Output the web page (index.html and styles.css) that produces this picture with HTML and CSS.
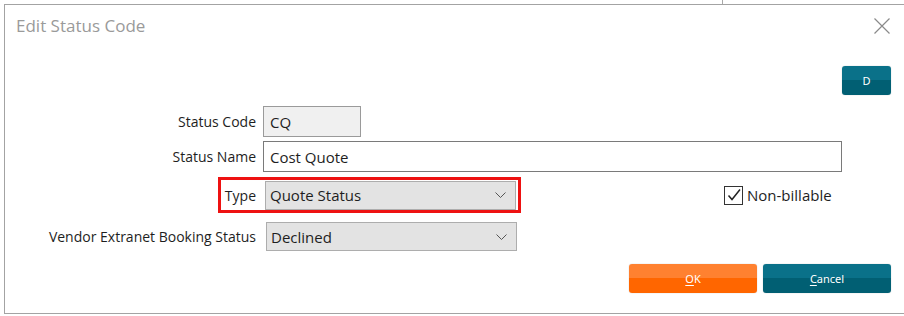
FILE: index.html
```html
<!DOCTYPE html>
<html lang="en">
<head>
    <meta charset="UTF-8">
    <title>Edit Status Code</title>
    <link rel="stylesheet" href="styles.css">
</head>
<body>

    <!-- bit of the window behind the dialog -->
    <div class="behind"></div>

    <div class="dialog">
        <!-- Title bar -->
        <div class="dialog-header">
            <span class="dialog-title">Edit Status Code</span>
            <svg class="close-icon" width="16" height="16" viewBox="0 0 16 16">
                <path d="M0.5 0.5 L15.5 15.5 M15.5 0.5 L0.5 15.5" stroke="#8a8a8a" stroke-width="1.2" fill="none"/>
            </svg>
        </div>

        <div class="toolbar">
            <button class="btn btn-teal btn-d">D</button>
        </div>

        <!-- Form fields -->
        <div class="row row-code">
            <label class="label">Status Code</label>
            <div class="input input-code">CQ</div>
        </div>

        <div class="row row-name">
            <label class="label">Status Name</label>
            <div class="input input-name">Cost Quote</div>
        </div>

        <div class="row row-type">
            <div class="highlight">
                <label class="label-inline">Type</label>
                <div class="select select-type">
                    <span>Quote Status</span>
                    <svg class="chevron" width="11" height="6" viewBox="0 0 11 6">
                        <path d="M0.5 0.5 L5.5 5.5 L10.5 0.5" stroke="#555" stroke-width="1" fill="none"/>
                    </svg>
                </div>
            </div>
            <div class="check">
                <span class="checkbox">
                    <svg width="16" height="16" viewBox="0 0 16 16">
                        <path d="M2.5 8.5 L6 12.5 L14 2.5" stroke="#222" stroke-width="1.5" fill="none"/>
                    </svg>
                </span>
                <span>Non-billable</span>
            </div>
        </div>

        <div class="row row-vendor">
            <label class="label label-vendor">Vendor Extranet Booking Status</label>
            <div class="select select-vendor">
                <span>Declined</span>
                <svg class="chevron" width="11" height="6" viewBox="0 0 11 6">
                    <path d="M0.5 0.5 L5.5 5.5 L10.5 0.5" stroke="#555" stroke-width="1" fill="none"/>
                </svg>
            </div>
        </div>

        <!-- Footer buttons -->
        <div class="footer">
            <button class="btn btn-orange"><u>O</u>K</button>
            <button class="btn btn-teal"><u>C</u>ancel</button>
        </div>
    </div>

</body>
</html>
```

FILE: styles.css
```css
/* General */
body {
    margin: 0;
    background: #fff;
    font-family: 'Open Sans', 'Noto Sans', sans-serif;
    color: #1e1e1e;
    overflow: hidden;
}

.behind {
    width: 1px;
    height: 4px;
    margin-left: 722px;
    background: #a8a8a8;
}

/* Dialog frame - right edge runs off screen */
.dialog {
    margin-left: 4px;
    border-top: 1px solid #a3a3a3;
    border-left: 1px solid #a3a3a3;
    border-bottom: 1px solid #a3a3a3;
    padding-right: 13px;
    padding-bottom: 20px;
}

.dialog-header {
    height: 50px;
    display: flex;
    align-items: flex-start;
    justify-content: space-between;
}

.dialog-title {
    margin-top: 9px;
    margin-left: 11px;
    font-size: 17px;
    line-height: 24px;
    color: #9a9a9a;
}

.close-icon {
    margin-top: 13px;
    margin-right: 1px;
}

.toolbar {
    display: flex;
    justify-content: flex-end;
    margin-top: 11px;
}

/* Buttons */
.btn {
    height: 29px;
    width: 128px;
    border: none;
    border-radius: 3px;
    color: #fff;
    font-family: 'Noto Sans', sans-serif;
    font-size: 11px;
    padding: 0;
    box-shadow: 0 0 1px rgba(0, 0, 0, 0.35);
}

.btn u {
    text-decoration-thickness: 1px;
    text-underline-offset: 2px;
}

.btn-teal {
    background: linear-gradient(#0a7189 0%, #0a7189 50%, #015f73 50%, #015f73 100%);
}

.btn-orange {
    background: linear-gradient(#ff8130 0%, #ff8130 50%, #ff6600 50%, #ff6600 100%);
}

.btn-d {
    width: 49px;
}

/* Rows */
.row {
    display: flex;
    align-items: center;
    font-size: 14px;
}

.label {
    width: 251px;
    padding-right: 7px;
    text-align: right;
    flex-shrink: 0;
}

.row-code {
    margin-top: 11px;
}

.row-name {
    margin-top: 4px;
}

.row-type {
    margin-top: 5px;
}

.row-vendor {
    margin-top: 9px;
}

.input {
    box-sizing: border-box;
    height: 31px;
    padding: 0 6px;
    display: flex;
    align-items: center;
    font-size: 15px;
}

.input-code {
    width: 98px;
    background: #f0f0f0;
    border: 1px solid #9a9a9a;
}

.input-name {
    width: 579px;
    background: #fff;
    border: 1px solid #7a7a7a;
}

.select {
    box-sizing: border-box;
    height: 29px;
    width: 251px;
    background: #e3e3e3;
    border: 1px solid #adadad;
    display: flex;
    align-items: center;
    justify-content: space-between;
    padding: 0 9px 0 4px;
    font-size: 15px;
}

/* Red annotation box around the Type field */
.highlight {
    margin-left: 213px;
    box-sizing: border-box;
    height: 36px;
    width: 303px;
    border: 3px solid #ee1111;
    display: flex;
    align-items: center;
    padding-right: 1px;
}

.label-inline {
    width: 35px;
    padding-right: 9px;
    text-align: right;
}

.select-type {
    height: 29px;
}

.label-vendor {
    padding-right: 10px;
    width: 251px;
}

/* Checkbox */
.check {
    margin-left: 203px;
    display: flex;
    align-items: center;
    gap: 4px;
    font-size: 15px;
}

.checkbox {
    box-sizing: border-box;
    width: 19px;
    height: 19px;
    border: 1px solid #333;
    display: flex;
    align-items: center;
    justify-content: center;
}

.footer {
    display: flex;
    justify-content: flex-end;
    gap: 6px;
    margin-top: 13px;
}
```
